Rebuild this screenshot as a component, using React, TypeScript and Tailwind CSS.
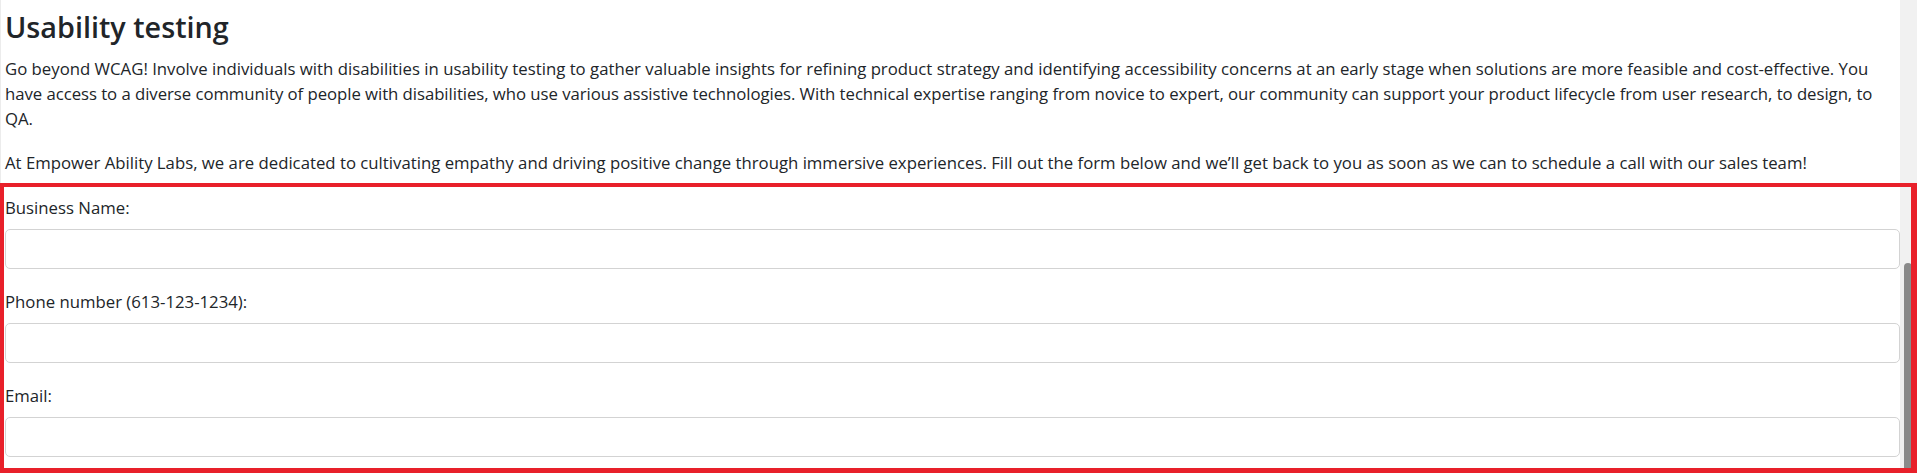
const fields = [
  { id: 'business', label: 'Business Name:', type: 'text' },
  { id: 'phone', label: 'Phone number (613-123-1234):', type: 'tel' },
  { id: 'email', label: 'Email:', type: 'email' },
];

export default function App() {
  return (
    <div className="relative flex h-[473px] w-[1917px] overflow-hidden bg-white font-['Open_Sans','Noto_Sans',sans-serif] text-[16.75px] text-[#212529]">
      {/* Page content */}
      <main className="flex-1 border-l border-[#ececec] pl-[4px]">
        <h2 className="mt-[10px] text-[28.75px] font-semibold leading-[34px]">Usability testing</h2>
        <p className="mt-[12px] whitespace-nowrap leading-[25px]">
          Go beyond WCAG! Involve individuals with disabilities in usability testing to gather valuable insights for refining product strategy and identifying accessibility concerns at an early stage when solutions are more feasible and cost-effective. You
          <br />
          <span className="tracking-[-0.05px]">
            have access to a diverse community of people with disabilities, who use various assistive technologies. With technical expertise ranging from novice to expert, our community can support your product lifecycle from user research, to design, to
          </span>
          <br />
          QA.
        </p>
        <p className="mt-[19px] whitespace-nowrap leading-[25px]">
          At Empower Ability Labs, we are dedicated to cultivating empathy and driving positive change through immersive experiences. Fill out the form below and we’ll get back to you as soon as we can to schedule a call with our sales team!
        </p>

        <form className="mt-[20px] flex flex-col">
          {fields.map((f, i) => (
            <div key={f.id} className={i > 0 ? 'mt-[20px]' : ''}>
              <label htmlFor={f.id} className="block leading-[25px]">
                {f.label}
              </label>
              <input
                id={f.id}
                type={f.type}
                className="mt-[9px] block h-[40px] w-full rounded-[5px] border border-[#d3d3d3] bg-white px-3"
              />
            </div>
          ))}
        </form>
      </main>

      {/* Scrollbar */}
      <div className="flex w-[17px] flex-col bg-[#f1f1f1]">
        <div className="ml-[4px] mt-[263px] w-[8px] flex-1 rounded-t-full bg-[#8a8a8a]" />
      </div>

      {/* Highlight box */}
      <div className="pointer-events-none absolute bottom-0 left-0 right-0 top-[183px] border-b-[5px] border-l-4 border-r-[6px] border-t-4 border-[#e8202a]" />
    </div>
  );
}
